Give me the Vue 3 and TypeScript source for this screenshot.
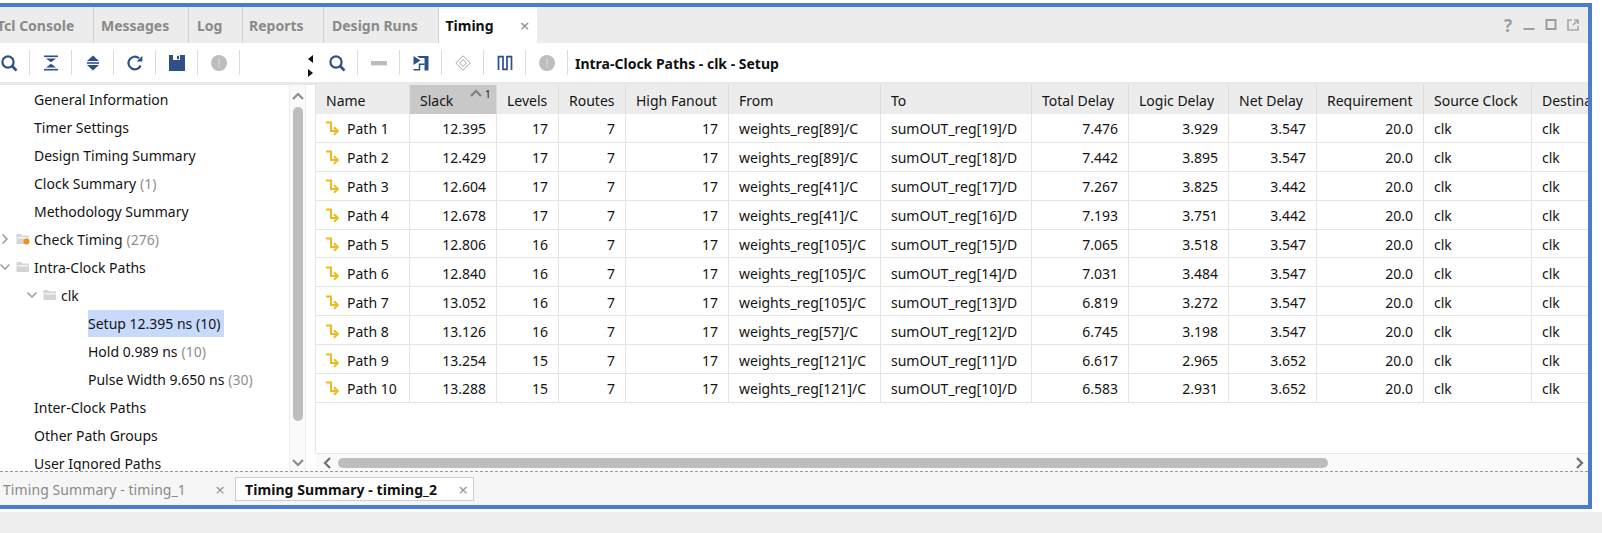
<script setup lang="ts">
/* Timing report panel: tab strip, report tree on the left, path table on the right */
interface TreeRow {
  label: string
  count?: string
  indent: number
  open?: boolean
  closed?: boolean
  warn?: boolean
  selected?: boolean
}

const topTabs = [
  { label: 'Tcl Console', width: 94, pad: 0 },
  { label: 'Messages', width: 95, pad: 7 },
  { label: 'Log', width: 53.5, pad: 8 },
  { label: 'Reports', width: 81.5, pad: 6.5 },
  { label: 'Design Runs', width: 114.5, pad: 8 },
]

const tree: TreeRow[] = [
  { label: 'General Information', indent: 34 },
  { label: 'Timer Settings', indent: 34 },
  { label: 'Design Timing Summary', indent: 34 },
  { label: 'Clock Summary', count: '(1)', indent: 34 },
  { label: 'Methodology Summary', indent: 34 },
  { label: 'Check Timing', count: '(276)', indent: 0, closed: true, warn: true },
  { label: 'Intra-Clock Paths', indent: 0, open: true },
  { label: 'clk', indent: 27, open: true },
  { label: 'Setup 12.395 ns (10)', indent: 88, selected: true },
  { label: 'Hold 0.989 ns', count: '(10)', indent: 88 },
  { label: 'Pulse Width 9.650 ns', count: '(30)', indent: 88 },
  { label: 'Inter-Clock Paths', indent: 34 },
  { label: 'Other Path Groups', indent: 34 },
  { label: 'User Ignored Paths', indent: 34 },
]

const columns = [
  { label: 'Name', width: 94 },
  { label: 'Slack', width: 87 },
  { label: 'Levels', width: 62 },
  { label: 'Routes', width: 67 },
  { label: 'High Fanout', width: 103 },
  { label: 'From', width: 152 },
  { label: 'To', width: 151 },
  { label: 'Total Delay', width: 97 },
  { label: 'Logic Delay', width: 100 },
  { label: 'Net Delay', width: 88 },
  { label: 'Requirement', width: 107 },
  { label: 'Source Clock', width: 108 },
  { label: 'Destination Clock', width: 130 },
]

const paths = [
  ['12.395', 17, 'weights_reg[89]/C', 'sumOUT_reg[19]/D', '7.476', '3.929', '3.547'],
  ['12.429', 17, 'weights_reg[89]/C', 'sumOUT_reg[18]/D', '7.442', '3.895', '3.547'],
  ['12.604', 17, 'weights_reg[41]/C', 'sumOUT_reg[17]/D', '7.267', '3.825', '3.442'],
  ['12.678', 17, 'weights_reg[41]/C', 'sumOUT_reg[16]/D', '7.193', '3.751', '3.442'],
  ['12.806', 16, 'weights_reg[105]/C', 'sumOUT_reg[15]/D', '7.065', '3.518', '3.547'],
  ['12.840', 16, 'weights_reg[105]/C', 'sumOUT_reg[14]/D', '7.031', '3.484', '3.547'],
  ['13.052', 16, 'weights_reg[105]/C', 'sumOUT_reg[13]/D', '6.819', '3.272', '3.547'],
  ['13.126', 16, 'weights_reg[57]/C', 'sumOUT_reg[12]/D', '6.745', '3.198', '3.547'],
  ['13.254', 15, 'weights_reg[121]/C', 'sumOUT_reg[11]/D', '6.617', '2.965', '3.652'],
  ['13.288', 15, 'weights_reg[121]/C', 'sumOUT_reg[10]/D', '6.583', '2.931', '3.652'],
].map((p, i) => ({
  name: `Path ${i + 1}`,
  slack: p[0],
  levels: p[1],
  from: p[2],
  to: p[3],
  total: p[4],
  logic: p[5],
  net: p[6],
}))

const w = (i: number) => ({ width: `${columns[i].width}px` })
</script>

<template>
  <div class="page">
    <div class="frame">
      <!-- top tabs -->
      <div class="tabs">
        <div
          v-for="t in topTabs"
          :key="t.label"
          class="tab"
          :style="{ width: `${t.width}px`, paddingLeft: `${t.pad}px` }"
        >
          <span v-if="t.pad">{{ t.label }}</span>
          <span v-else class="tab-clip">{{ t.label }}</span>
        </div>
        <div class="tab tab-active">
          <span>Timing</span>
          <span class="tab-x">×</span>
        </div>
        <div class="win-icons">
          <span class="help">?</span>
          <svg width="12" height="12" viewBox="0 0 12 12"><rect x="0.5" y="9" width="11" height="2" fill="#a0a0a0" /></svg>
          <svg width="12" height="12" viewBox="0 0 12 12"><rect x="1.5" y="1" width="9" height="9" fill="none" stroke="#9c9c9c" stroke-width="2" /></svg>
          <svg width="12" height="12" viewBox="0 0 12 12" fill="none" stroke="#a8a8a8" stroke-width="1.7"><path d="M5 1H1v10h10V7" /><path d="M7 1h4v4M11 1L6 6" /></svg>
        </div>
      </div>

      <div class="split">
        <!-- report tree -->
        <section class="left">
          <div class="toolbar toolbar-left">
            <div class="tool">
              <svg width="18" height="18" viewBox="0 0 18 18" fill="none" stroke="#2f4f87" stroke-width="2.2"><circle cx="8" cy="8" r="5.6" /><path d="M12 12l4.5 4.5" stroke-width="2.6" /></svg>
            </div>
            <div class="tool">
              <svg width="18" height="18" viewBox="0 0 18 18" fill="#2f4f87"><rect x="2" y="1.5" width="14" height="1.6" /><rect x="2" y="14.9" width="14" height="1.6" /><path d="M4 4.4h10L9 8.3zM4 13.6h10L9 9.7z" /></svg>
            </div>
            <div class="tool">
              <svg width="18" height="18" viewBox="0 0 18 18" fill="#2f4f87"><path d="M9 1.5L15 7H3zM9 16.5L15 11H3z" /><rect x="3" y="8.2" width="12" height="1.6" /></svg>
            </div>
            <div class="tool">
              <svg width="18" height="18" viewBox="0 0 18 18" fill="none" stroke="#2f4f87" stroke-width="2.2"><path d="M14.6 11.5A6.3 6.3 0 1 1 13 4.3" /><path d="M16.3 1.8v5.6h-5.6z" fill="#2f4f87" stroke="none" /></svg>
            </div>
            <div class="tool">
              <svg width="16" height="16" viewBox="0 0 16 16"><path d="M0 0h16v16H0z" fill="#2f4f87" /><rect x="4" y="0" width="7" height="5" fill="#fff" /><rect x="8" y="0.8" width="2" height="3.4" fill="#2f4f87" /></svg>
            </div>
            <div class="tool">
              <svg width="16" height="16" viewBox="0 0 16 16"><circle cx="8" cy="8" r="8" fill="#bdbdbd" /><rect x="7.2" y="3.5" width="1.6" height="6" fill="#d8d8d8" /><rect x="7.2" y="10.8" width="1.6" height="1.7" fill="#d8d8d8" /></svg>
            </div>
          </div>
          <span class="splitter-arrow arrow-l"></span>
          <span class="splitter-arrow arrow-r"></span>

          <div class="tree-area">
            <ul class="tree">
              <li v-for="row in tree" :key="row.label" class="tree-row" :style="{ paddingLeft: `${row.indent}px` }">
                <template v-if="row.open || row.closed">
                  <svg class="twist" width="10" height="10" viewBox="0 0 10 10" fill="none" stroke="#9a9a9a" stroke-width="1.5">
                    <path v-if="row.open" d="M0.5 2.5L5 7l4.5-4.5" />
                    <path v-else d="M2.5 0.5L7 5l-4.5 4.5" />
                  </svg>
                  <svg class="folder" width="14" height="12" viewBox="0 0 14 12">
                    <path d="M0.5 1h4.5l1 1.5h7v8.5H0.5z" fill="#d4d4d4" />
                    <path d="M1.5 4h11v1.5h-11z" fill="#f4f4f4" />
                    <circle v-if="row.warn" cx="10.5" cy="8.5" r="3" fill="#f39019" />
                  </svg>
                </template>
                <span class="tree-label" :class="{ selected: row.selected }">{{ row.label }}</span>
                <span v-if="row.count" class="count">{{ row.count }}</span>
              </li>
            </ul>
            <div class="vscroll">
              <svg width="12" height="8" viewBox="0 0 12 8" fill="none" stroke="#8c8c8c" stroke-width="2.2"><path d="M1 7l5-5 5 5" /></svg>
              <div class="vthumb"></div>
              <svg class="vdown" width="12" height="8" viewBox="0 0 12 8" fill="none" stroke="#8c8c8c" stroke-width="2.2"><path d="M1 1l5 5 5-5" /></svg>
            </div>
          </div>
        </section>

        <!-- path table -->
        <section class="right">
          <div class="toolbar">
            <div class="tool">
              <svg width="18" height="18" viewBox="0 0 18 18" fill="none" stroke="#2f4f87" stroke-width="2.2"><circle cx="8" cy="8" r="5.6" /><path d="M12 12l4.5 4.5" stroke-width="2.6" /></svg>
            </div>
            <div class="tool">
              <svg width="16" height="6" viewBox="0 0 16 6"><rect y="1" width="16" height="4.4" fill="#bdbdbd" /></svg>
            </div>
            <div class="tool">
              <svg width="16" height="16" viewBox="0 0 16 16" fill="#2f4f87"><path d="M0.5 1L7.5 5.5 0.5 10z" /><path d="M4 1H15.5V15.5H11.5V3H6.5z" /><path d="M0.5 14.7H6.5V9.3H11.5" fill="none" stroke="#2f4f87" stroke-width="1.5" /></svg>
            </div>
            <div class="tool">
              <svg width="16" height="16" viewBox="0 0 16 16" fill="none" stroke="#a8a8a8" stroke-width="1"><path d="M8 .8L15.2 8 8 15.2.8 8z" /><path d="M8 4.6L11.4 8 8 11.4 4.6 8z" /></svg>
            </div>
            <div class="tool">
              <svg width="16" height="16" viewBox="0 0 16 16" fill="none" stroke="#2f4f87" stroke-width="1.7"><path d="M1.5 15V1.7H6V14.3H10V1.7H14.5V15" /></svg>
            </div>
            <div class="tool">
              <svg width="16" height="16" viewBox="0 0 16 16"><circle cx="8" cy="8" r="8" fill="#bdbdbd" /><rect x="7.2" y="3.5" width="1.6" height="6" fill="#d8d8d8" /><rect x="7.2" y="10.8" width="1.6" height="1.7" fill="#d8d8d8" /></svg>
            </div>
            <h1 class="report-title">Intra-Clock Paths - clk - Setup</h1>
          </div>

          <div class="table">
            <div class="thead">
              <div
                v-for="(c, i) in columns"
                :key="c.label"
                class="th"
                :class="{ sorted: c.label === 'Slack' }"
                :style="w(i)"
              >
                {{ c.label }}
                <span v-if="c.label === 'Slack'" class="sort">
                  <svg width="12" height="8" viewBox="0 0 12 8" fill="none" stroke="#808080" stroke-width="2.2"><path d="M1 7l5-5 5 5" /></svg>
                  <i>1</i>
                </span>
              </div>
            </div>
            <div v-for="p in paths" :key="p.name" class="tr">
              <div class="td td-name" :style="w(0)">
                <svg width="13" height="15" viewBox="0 0 13 15" fill="none" stroke="#f0b91e" stroke-width="2"><path d="M0 1.5h5v8.5h6" /><path d="M8 6.3L11.8 10 8 13.7" /></svg>
                {{ p.name }}
              </div>
              <div class="td num" :style="w(1)">{{ p.slack }}</div>
              <div class="td num" :style="w(2)">{{ p.levels }}</div>
              <div class="td num" :style="w(3)">7</div>
              <div class="td num" :style="w(4)">17</div>
              <div class="td" :style="w(5)">{{ p.from }}</div>
              <div class="td" :style="w(6)">{{ p.to }}</div>
              <div class="td num" :style="w(7)">{{ p.total }}</div>
              <div class="td num" :style="w(8)">{{ p.logic }}</div>
              <div class="td num" :style="w(9)">{{ p.net }}</div>
              <div class="td num" :style="w(10)">20.0</div>
              <div class="td" :style="w(11)">clk</div>
              <div class="td" :style="w(12)">clk</div>
            </div>
          </div>

          <div class="hscroll">
            <svg class="h-left" width="8" height="12" viewBox="0 0 8 12" fill="none" stroke="#6f6f6f" stroke-width="2.2"><path d="M7 1L2 6l5 5" /></svg>
            <div class="hthumb"></div>
            <svg class="h-right" width="8" height="12" viewBox="0 0 8 12" fill="none" stroke="#6f6f6f" stroke-width="2.2"><path d="M1 1l5 5-5 5" /></svg>
          </div>
        </section>
      </div>

      <!-- report tabs -->
      <div class="doc-tabs">
        <div class="doc-tab">
          <span>Timing Summary - timing_1</span>
          <span class="doc-x">×</span>
        </div>
        <div class="doc-tab doc-active">
          <span>Timing Summary - timing_2</span>
          <span class="doc-x">×</span>
        </div>
      </div>
    </div>
    <div class="statusbar"></div>
  </div>
</template>

<style>
html,
body {
  margin: 0;
  background: #fff;
}
</style>

<style scoped>
.page {
  width: 1602px;
  height: 533px;
  display: flex;
  flex-direction: column;
  overflow: hidden;
  background: #fff;
  font-family: 'Noto Sans', 'Open Sans', sans-serif;
  font-size: 14px;
  color: #141414;
}

.frame {
  width: 1592px;
  height: 506px;
  margin-top: 3px;
  box-sizing: border-box;
  border: 4px solid #4a7bcf;
  border-left: 0;
  display: flex;
  flex-direction: column;
  flex: none;
}

.statusbar {
  flex: 1;
  margin-top: 3px;
  background: #eeeeee;
}

/* top tabs */
.tabs {
  height: 36px;
  flex: none;
  display: flex;
  background: #ececec;
  position: relative;
}

.tab {
  box-sizing: border-box;
  display: flex;
  align-items: center;
  height: 100%;
  border-right: 1px solid #cfcfcf;
  font-weight: 700;
  color: #8a8a8a;
  white-space: nowrap;
  overflow: hidden;
}

.tab-clip {
  margin-left: -3px;
}

.tab-active {
  width: 98px;
  padding-left: 7px;
  background: #fff;
  color: #111;
  border-right: 0;
}

.tab-x {
  margin-left: auto;
  margin-right: 7px;
  font-weight: 400;
  font-size: 17px;
  color: #8e8e8e;
}

.win-icons {
  margin-left: auto;
  margin-right: 9px;
  display: flex;
  align-items: center;
  gap: 10px;
}

.help {
  font-weight: 700;
  font-size: 17px;
  color: #9f9f9f;
  margin-right: 1px;
}

/* split */
.split {
  flex: 1;
  display: flex;
  min-height: 0;
}

.left {
  width: 316px;
  flex: none;
  display: flex;
  flex-direction: column;
  position: relative;
  overflow: hidden;
}

.right {
  flex: 1;
  min-width: 0;
  display: flex;
  flex-direction: column;
}

.toolbar {
  height: 42px;
  box-sizing: border-box;
  flex: none;
  display: flex;
  align-items: center;
  border-bottom: 3px solid #e8e8e8;
}

.toolbar-left {
  margin-left: -12px;
}

.tool {
  width: 42px;
  height: 25px;
  flex: none;
  box-sizing: border-box;
  display: flex;
  align-items: center;
  justify-content: center;
  border-right: 1px solid #dcdcdc;
}

.report-title {
  margin: 2px 0 0 7px;
  font-size: 14px;
  font-weight: 700;
  color: #111;
}

.splitter-arrow {
  position: absolute;
  right: 3px;
  width: 0;
  height: 0;
  border-style: solid;
  border-color: transparent;
}

.arrow-l {
  top: 12px;
  border-width: 4px 5px 4px 0;
  border-right-color: #111;
}

.arrow-r {
  top: 26px;
  border-width: 4.5px 0 4.5px 5px;
  border-left-color: #111;
}

/* tree */
.tree-area {
  flex: 1;
  min-height: 0;
  display: flex;
}

.tree {
  list-style: none;
  margin: 0;
  padding: 0;
  width: 289px;
  flex: none;
  overflow: hidden;
}

.tree-row {
  height: 28px;
  display: flex;
  align-items: center;
  white-space: nowrap;
  box-sizing: border-box;
}

.twist {
  margin-right: 6px;
  flex: none;
}

.folder {
  margin-right: 4px;
  flex: none;
}

.tree-label {
  line-height: 27px;
}

.tree-label.selected {
  background: #c8dafc;
  padding-right: 4px;
}

.count {
  margin-left: 4px;
  color: #8e8e8e;
}

.vscroll {
  width: 17px;
  flex: none;
  box-sizing: border-box;
  background: #fafafa;
  border: 1px solid #ececec;
  border-width: 0 1px;
  display: flex;
  flex-direction: column;
  align-items: center;
  padding: 7px 0 4px;
}

.vthumb {
  width: 10px;
  height: 314px;
  margin-top: 7px;
  border-radius: 5px;
  background: #bdbdbd;
}

.vdown {
  margin-top: auto;
}

/* table */
.table {
  flex: 1;
  min-height: 0;
  overflow: hidden;
  border-left: 1px solid #e6e6e6;
  margin-left: -1px;
}

.thead,
.tr {
  display: flex;
  width: max-content;
}

.thead {
  height: 29px;
  background: #ececec;
}

.th {
  box-sizing: border-box;
  flex: none;
  display: flex;
  align-items: center;
  padding: 2px 0 0 10px;
  border-right: 1px solid #dddddd;
  position: relative;
  white-space: nowrap;
}

.th.sorted {
  background: #c8c8c8;
}

.sort {
  position: absolute;
  left: 60px;
  top: 4px;
  display: flex;
}

.sort i {
  font-style: normal;
  font-size: 10px;
  line-height: 10px;
  margin-left: 3px;
}

.tr {
  height: 28.9px;
}

.td {
  box-sizing: border-box;
  flex: none;
  display: flex;
  align-items: center;
  padding: 2px 10px 0;
  border-right: 1px solid #e4e4e4;
  border-bottom: 1px solid #e4e4e4;
  white-space: nowrap;
}

.td.num {
  justify-content: flex-end;
}

.td-name svg {
  margin-right: 8px;
}

/* horizontal scrollbar */
.hscroll {
  height: 18px;
  box-sizing: border-box;
  flex: none;
  display: flex;
  align-items: center;
  background: #fafafa;
  border-top: 1px solid #e6e6e6;
}

.h-left {
  margin-left: 7px;
}

.hthumb {
  width: 990px;
  height: 10px;
  margin-left: 7px;
  border-radius: 5px;
  background: #bdbdbd;
}

.h-right {
  margin-left: auto;
  margin-right: 4px;
}

/* report tabs */
.doc-tabs {
  height: 34px;
  flex: none;
  box-sizing: border-box;
  border-top: 1px dashed #9a9a9a;
  background: #f6f6f6;
  display: flex;
  align-items: flex-start;
  padding-top: 5px;
  letter-spacing: 0.08px;
}

.doc-tab {
  height: 24px;
  box-sizing: border-box;
  display: flex;
  align-items: center;
  width: 235px;
  padding-left: 3px;
  color: #8a8a8a;
  white-space: nowrap;
}

.doc-active {
  width: 239px;
  padding-left: 9px;
  background: #fff;
  border: 1px solid #cfcfcf;
  color: #111;
  font-weight: 700;
}

.doc-x {
  margin-left: auto;
  margin-right: 5px;
  font-size: 17px;
  font-weight: 400;
  color: #9a9a9a;
}

.doc-tab:first-child .doc-x {
  margin-right: 10px;
}
</style>
